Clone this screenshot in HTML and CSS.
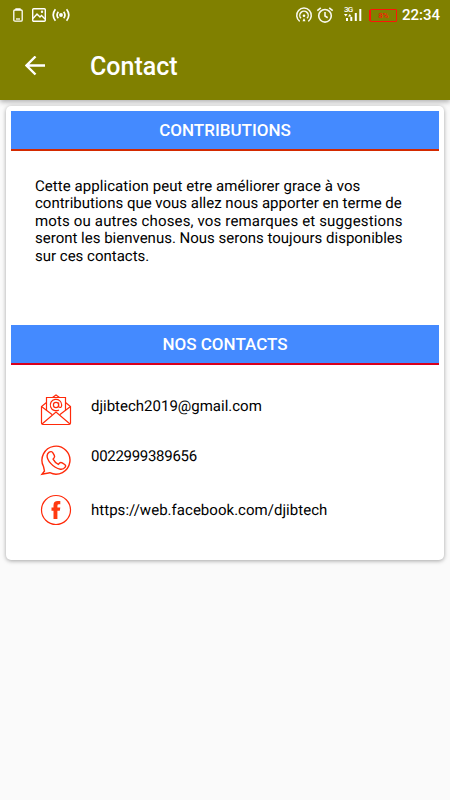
FILE: index.html
```html
<!DOCTYPE html>
<html lang="fr">

<head>
    <meta charset="UTF-8" />
    <meta name="viewport" content="width=device-width, initial-scale=1.0" />
    <title>Contact</title>
    <link rel="stylesheet" href="styles.css">
</head>

<body>
    <header class="app-header">
        <div class="status-bar">
            <div class="status-left">
                <svg width="10" height="14" viewBox="0 0 10 14" fill="none" stroke="#fff" stroke-width="1.3">
                    <path d="M3 2V.8h4V2M1.8 2h6.4q1 0 1 1v9q0 1.2-1.2 1.2H2Q.8 13.2.8 12V3q0-1 1-1z" />
                    <path d="M3 11h4" />
                </svg>
                <svg width="14" height="14" viewBox="0 0 14 14" fill="none" stroke="#fff" stroke-width="1.4">
                    <rect x=".7" y=".7" width="12.6" height="12.6" rx="1" />
                    <path d="M1 10.5l4-4.500 3 3 1.500-1.500L13 11" />
                    <circle cx="10" cy="3.7" r=".5" />
                </svg>
                <svg width="18" height="14" viewBox="0 0 18 14" fill="none" stroke="#fff" stroke-width="1.7">
                    <circle cx="9" cy="7" r="1.9" fill="#fff" stroke="none" />
                    <path d="M6.3 3.7Q3.8 7 6.3 10.3M11.7 3.7Q14.2 7 11.7 10.3M3.4 1.3Q-1 7 3.4 12.7M14.6 1.3Q19 7 14.6 12.7" />
                </svg>
            </div>
            <div class="status-right">
                <svg class="cast" width="18" height="16" viewBox="0 0 18 16" fill="none" stroke="#f8f8ee" stroke-width="1.5">
                    <path d="M4.7 14.3a7.300 7.300 0 1 1 8.600 0M6 11.300a4.200 4.200 0 1 1 6 0" />
                    <circle cx="9" cy="8.7" r="1.3" fill="#fff" stroke="none" />
                    <path d="M7.5 14.3L9 11l1.500 3.300z" fill="#fff" stroke="none" />
                </svg>
                <svg class="alarm" width="18" height="16" viewBox="0 0 18 16" fill="none" stroke="#f8f8ee" stroke-width="1.6">
                    <circle cx="9" cy="8.8" r="6.3" />
                    <path d="M9 5v4l2.700 1.700M1.300 3.700L4.800.8M16.700 3.700L13.200.8" />
                </svg>
                <div class="signal">
                    <span class="network">3G</span>
                    <svg width="18" height="16" viewBox="0 0 18 16" fill="#fff">
                        <path d="M2 14V11h2v3zM6.300 14V10h2v4zM10.800 14V6h2v8zM15.300 14V2h2v12z" />
                        <path d="M0 7h3.600L1.800 9.500zM4 9.500h3.600L5.800 7z" />
                    </svg>
                </div>
                <div class="battery"><span>8%</span></div>
                <span class="clock">22:34</span>
            </div>
        </div>
        <div class="toolbar">
            <svg class="back" width="22" height="20" viewBox="0 0 22 20" fill="none" stroke="#fff" stroke-width="2.4">
                <path d="M20 9.500H2M10.500.5L1.500 9.500l9 9" />
            </svg>
            <h1>Contact</h1>
        </div>
    </header>

    <main class="card">
        <h2 class="section-title">CONTRIBUTIONS</h2>
        <p class="message">
            <span class="line-wide">Cette application peut etre améliorer grace à vos</span>
            <span>contributions que vous allez nous apporter en terme de</span>
            <span class="line-wider">mots ou autres choses, vos remarques et suggestions</span>
            <span>seront les bienvenus. Nous serons toujours disponibles</span>
            <span>sur ces contacts.</span>
        </p>

        <h2 class="section-title contacts-title">NOS CONTACTS</h2>
        <ul class="contacts">
            <li class="mail">
                <svg width="32" height="32" viewBox="0 0 32 32" fill="none" stroke="#ff2a0a" stroke-width="1.2">
                    <path d="M6.500 8.500L1.500 12.500V29q0 1.500 1.500 1.500h26q1.500 0 1.500-1.500V12.500l-5-4" />
                    <path d="M6.500 16.500V3.500h19v13M12.500 3.500L16 1l3.500 2.500" />
                    <path d="M1.500 12.500L12 20.500M30.500 12.500L20 20.500M2 30l14-12 14 12" />
                    <circle cx="16" cy="11" r="2.6" />
                    <path d="M18.600 8.500v3.200q0 1.800 1.500 1.800t1.600-2.500a5.700 5.700 0 1 0-2.800 4.900" />
                </svg>
                <span>djibtech2019@gmail.com</span>
            </li>
            <li class="phone">
                <svg width="32" height="32" viewBox="0 0 32 32" fill="none" stroke="#ff2a0a" stroke-width="1.4">
                    <path d="M3.500 22.500A14 14 0 1 1 9.800 28.700L2 30.300L4.500 27z" />
                    <path d="M9.200 8.200q2.300-1.500 3.700.7l1.400 2.500q.8 1.400-.4 2.700l-.8 1q1.900 3.700 5.300 5.200l1.200-1.200q1.100-1.100 2.600-.2l2.500 1.600q1.500 1 .5 2.600-1.700 2.500-4.800 2.100-5.300-.9-9.700-5.800-3.900-4.500-3.600-7.800.2-2.200 2.100-3.400z" />
                </svg>
                <span>0022999389656</span>
            </li>
            <li class="facebook">
                <svg width="32" height="32" viewBox="0 0 32 32">
                    <circle cx="16" cy="16" r="14.5" fill="none" stroke="#ff2a0a" stroke-width="1.2" />
                    <path d="M13.500 25v-8.200H11.500v-3.300h2v-2.300Q13.500 7 17.800 7h2.500v3.300h-1.400q-1.500 0-1.500 1.400v1.800h2.900l-.5 3.300h-2.400V25z" fill="#ff3a10" />
                </svg>
                <span>https://web.facebook.com/djibtech</span>
            </li>
        </ul>
    </main>
</body>

</html>
```

FILE: styles.css
```css
* {
    box-sizing: border-box;
}

body {
    font-family: Roboto, sans-serif;
    background-color: #fafafa;
    margin: 0;
    color: #000;
    height: 100vh;
    overflow: hidden;
}

.app-header {
    height: 100px;
    background-color: #808000;
    box-shadow: 0 2px 5px rgba(0, 0, 0, 0.3);
    color: #fff;
}

.status-bar {
    height: 32px;
    padding: 0 10px 2px 13px;
    display: flex;
    align-items: center;
    justify-content: space-between;
}

.status-left,
.status-right {
    display: flex;
    align-items: center;
}

.status-left svg:nth-child(2) {
    margin-left: 9px;
}

.status-left svg:nth-child(3) {
    margin-left: 6px;
}

.alarm {
    margin-left: 3px;
}

.signal {
    position: relative;
    height: 18px;
    margin-left: 10px;
    padding-top: 1px;
}

.signal svg {
    display: block;
}

.network {
    position: absolute;
    left: 0;
    top: -1px;
    font-size: 8px;
    line-height: 9px;
    font-weight: 500;
    letter-spacing: -0.8px;
}

.battery {
    width: 27px;
    height: 13px;
    margin-left: 8px;
    border: 1px solid #ff1408;
    border-radius: 1px;
    box-shadow: -2px 0 0 -1px #ff1408;
    color: #ff1408;
    font-size: 8px;
    font-weight: 500;
    line-height: 11px;
    text-align: center;
}

.clock {
    margin-left: 5px;
    font-size: 15px;
    font-weight: 500;
}

.toolbar {
    height: 68px;
    padding-left: 25px;
    display: flex;
    align-items: center;
}

.toolbar h1 {
    margin: 0 0 0 43px;
    font-size: 25px;
    font-weight: 500;
}

.card {
    height: 454px;
    margin: 6px 6px 0;
    padding: 5px;
    background-color: #fff;
    border-radius: 5px;
    box-shadow: 0 1px 4px rgba(0, 0, 0, 0.35);
}

.section-title {
    height: 40px;
    margin: 0;
    background-color: #448aff;
    border-bottom: 2px solid #d42a00;
    color: #fff;
    font-size: 17px;
    font-weight: 500;
    line-height: 39px;
    text-align: center;
}

.message {
    height: 174px;
    margin: 0;
    padding: 26.5px 0 0 24px;
    font-size: 15px;
    line-height: 17.5px;
    white-space: nowrap;
    text-rendering: geometricPrecision;
}

.message span {
    display: block;
}

.line-wide {
    letter-spacing: 0.06px;
}

.line-wider {
    letter-spacing: 0.15px;
}

.contacts-title {
    border-color: #d9001b;
}

.contacts {
    list-style: none;
    margin: 0;
    padding: 29px 0 0 29px;
    font-size: 15px;
    text-rendering: geometricPrecision;
}

.contacts li {
    height: 32px;
    display: flex;
    align-items: center;
    margin-bottom: 18px;
}

.contacts svg {
    margin-right: 19px;
}

.mail span,
.phone span {
    padding-bottom: 8px;
}

.phone span {
    letter-spacing: -0.29px;
}

.facebook span {
    letter-spacing: 0.03px;
}
```
